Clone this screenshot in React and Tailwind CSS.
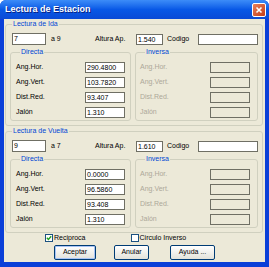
import React from "react";

const Field = ({ value = "", w = "w-[40px]", disabled = false }) => (
    <div
        className={`${w} h-[11px] border border-[#6F6F64] ${
            disabled ? "bg-[#ECE9D8]" : "bg-white"
        } text-[7px] leading-[9px] pl-[1px] text-black overflow-hidden`}
    >
        {value}
    </div>
);

const Group = ({ label, className = "", legendPad = "ml-[6px]", children }) => (
    <fieldset
        className={`border border-[#D0D0BF] rounded-[3px] ${className}`}
    >
        <legend className={`${legendPad} px-[1px] text-[7px] leading-[8px] text-[#0046D5]`}>
            {label}
        </legend>
        {children}
    </fieldset>
);

const DataRow = ({ label, value, disabled }) => (
    <div className="flex items-center justify-between h-[11px]">
        <span
            className={`text-[7px] ${
                disabled ? "text-[#ACA899]" : "text-black"
            }`}
        >
            {label}
        </span>
        <Field value={value} disabled={disabled} />
    </div>
);

const Lectura = ({ title, from, to, altura, values }) => {
    const labels = ["Ang.Hor.", "Ang.Vert.", "Dist.Red.", "Jalón"];
    return (
        <Group label={title} className="ml-[1px] w-[258px] pb-[4px]">
            {/* Header row */}
            <div className="flex items-center h-[12px] mt-[5px] ml-[6px]">
                <Field value={from} w="w-[34px] h-[12px]" />
                <span className="w-[44px] ml-[5px] text-[7px]">a {to}</span>
                <span className="w-[41px] text-[7px]">Altura Ap.</span>
                <Field value={altura} w="w-[27px]" />
                <span className="w-[31px] ml-[4px] text-[7px]">Codigo</span>
                <Field value="" w="w-[60px]" />
            </div>

            {/* Directa / Inversa */}
            <div className="flex mt-[3px] ml-[4px] gap-[4px]">
                <Group label="Directa" legendPad="ml-[9px]" className="w-[121px] pb-[2px]">
                    <div className="flex flex-col gap-[4px] mt-[6px] pl-[5px] pr-[5px]">
                        {labels.map((l, i) => (
                            <DataRow key={l} label={l} value={values[i]} />
                        ))}
                    </div>
                </Group>
                <Group label="Inversa" legendPad="ml-[9px]" className="w-[123px] pb-[2px]">
                    <div className="flex flex-col gap-[4px] mt-[6px] pl-[4px] pr-[7px]">
                        {labels.map((l) => (
                            <DataRow key={l} label={l} value="" disabled />
                        ))}
                    </div>
                </Group>
            </div>
        </Group>
    );
};

const Checkbox = ({ checked, label }) => (
    <div className="flex items-center gap-[1px]">
        <div className="w-[8px] h-[8px] border border-[#1C5180] bg-white flex items-center justify-center">
            {checked && (
                <svg width="6" height="6" viewBox="0 0 6 6">
                    <path
                        d="M0.8 2.8 L2.4 4.4 L5.2 1.2"
                        stroke="#21A121"
                        strokeWidth="1.4"
                        fill="none"
                    />
                </svg>
            )}
        </div>
        <span className="text-[7px] text-black">{label}</span>
    </div>
);

const XpButton = ({ label, w, focus }) => (
    <button
        className={`${w} h-[15px] rounded-[2px] border border-[#003C74] bg-gradient-to-b from-white to-[#E3E2DA] text-[7px] text-black flex items-center justify-center ${
            focus ? "shadow-[inset_0_0_0_1px_#A9C4F5]" : ""
        }`}
    >
        {label}
    </button>
);

export default function App() {
    return (
        <div
            className="w-[269px] h-[267px] bg-[#0A3FD8] rounded-t-[6px] flex flex-col overflow-hidden"
            style={{ fontFamily: "'Liberation Sans', Arial, sans-serif" }}
        >
            {/* Title bar */}
            <div className="h-[19px] shrink-0 flex items-center justify-between pl-[5px] pr-[3px] bg-gradient-to-b from-[#3C8CF8] via-[#0858E6] to-[#0A4AD6]">
                <span className="text-white font-bold text-[9px] [text-shadow:1px_1px_0_#0A1F80]">
                    Lectura de Estacion
                </span>
                <div className="w-[14px] h-[14px] rounded-[2px] border border-white bg-gradient-to-br from-[#E8805A] to-[#C43A14] flex items-center justify-center">
                    <svg width="8" height="8" viewBox="0 0 8 8">
                        <path
                            d="M1.5 1.5 L6.5 6.5 M6.5 1.5 L1.5 6.5"
                            stroke="white"
                            strokeWidth="1.6"
                        />
                    </svg>
                </div>
            </div>

            {/* Body */}
            <div className="flex-1 mx-[4px] mb-[5px] bg-[#ECE9D8] pt-[1px] flex flex-col">
                <Lectura
                    title="Lectura de Ida"
                    from="7"
                    to="9"
                    altura="1.540"
                    values={["290.4800", "103.7820", "93.407", "1.310"]}
                />
                <div className="mt-[1px]">
                    <Lectura
                        title="Lectura de Vuelta"
                        from="9"
                        to="7"
                        altura="1.610"
                        values={["0.0000", "96.5860", "93.408", "1.310"]}
                    />
                </div>

                {/* Options */}
                <div className="flex items-center h-[8px] mt-[1px] pl-[41px] gap-[45px]">
                    <Checkbox checked label="Reciproca" />
                    <Checkbox label="Circulo Inverso" />
                </div>

                {/* Buttons */}
                <div className="flex mt-[3px] pl-[50px]">
                    <XpButton label="Aceptar" w="w-[42px]" focus />
                    <div className="ml-[18px]">
                        <XpButton label="Anular" w="w-[35px]" />
                    </div>
                    <div className="ml-[21px]">
                        <XpButton label="Ayuda ..." w="w-[45px]" />
                    </div>
                </div>
            </div>
        </div>
    );
}
